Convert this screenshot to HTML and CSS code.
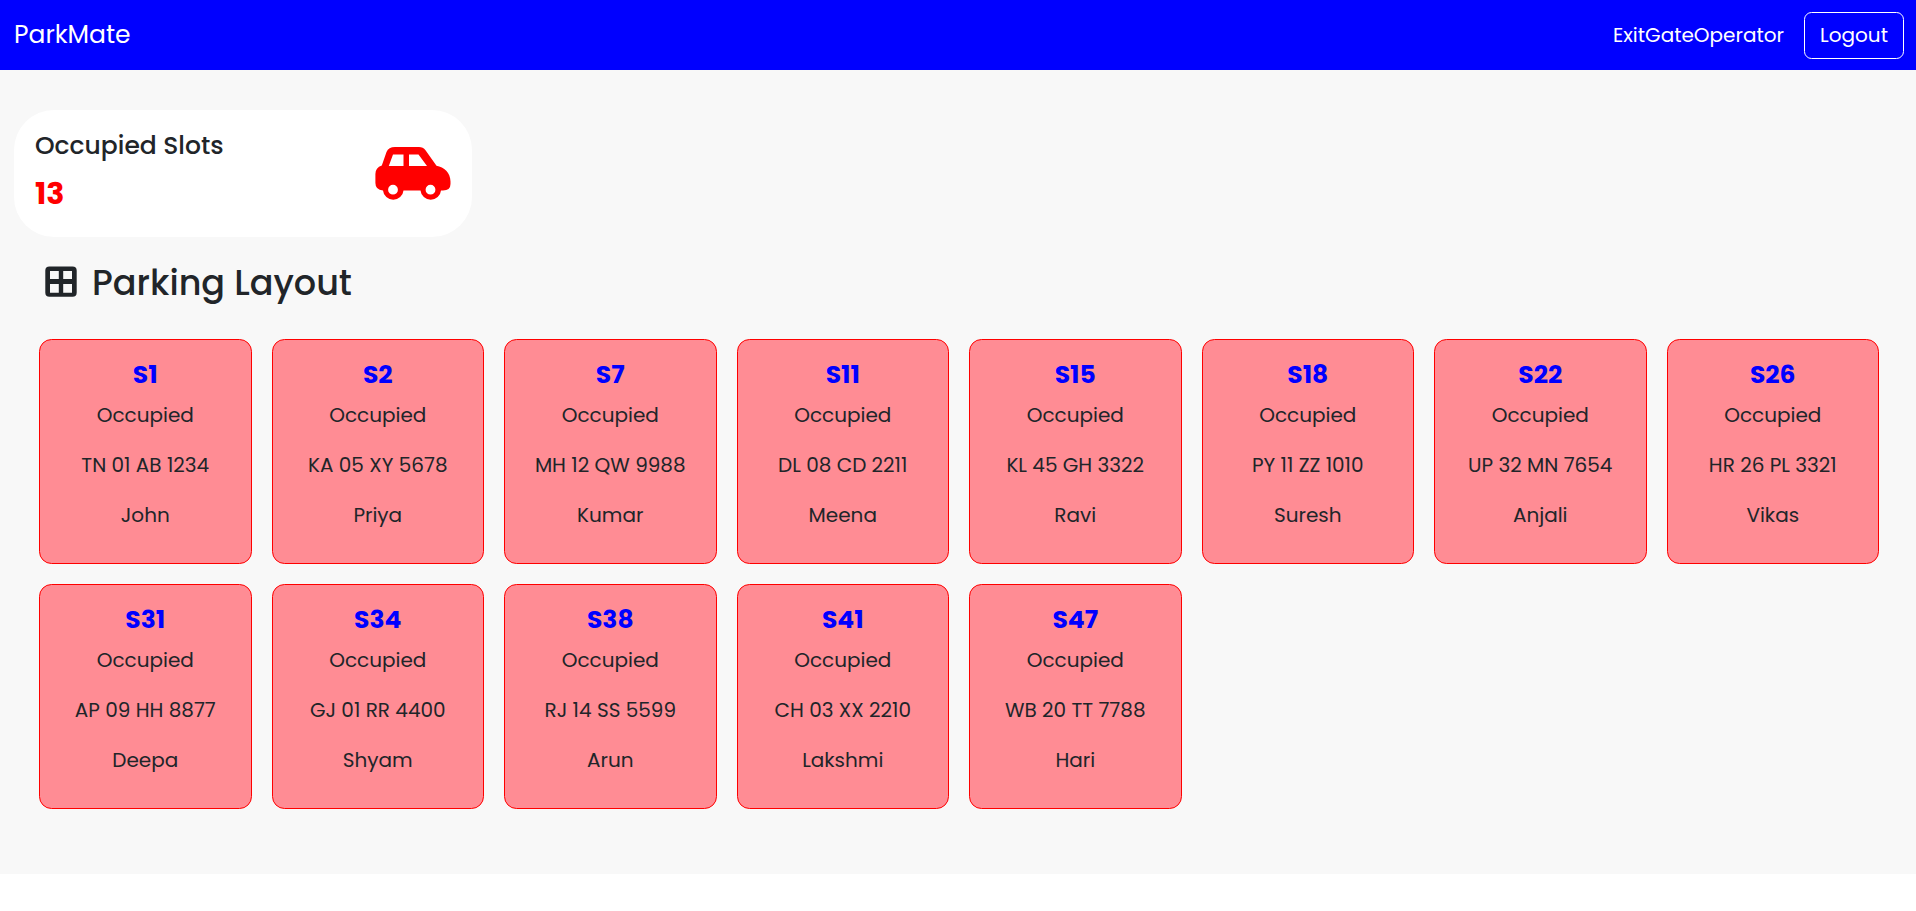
FILE: index.html
```html
<!DOCTYPE html>
<html lang="en">
<head>
<meta charset="utf-8">
<title>ParkMate</title>
<link rel="stylesheet" href="styles.css">
</head>
<body>
<nav class="navbar">
  <span class="brand">ParkMate</span>
  <div class="nav-right">
    <span class="role">ExitGateOperator</span>
    <button class="logout">Logout</button>
  </div>
</nav>
<main class="page">
  <section class="stat">
    <div>
      <h5 class="stat-title">Occupied Slots</h5>
      <p class="stat-value">13</p>
    </div>
    <svg class="car" viewBox="0 0 76 54" width="76" height="54">
      <path fill="#f00" fill-rule="evenodd" d="M20 0H44Q48 0 50.500 3.200L61.500 18.800C69 20 75.500 26 75.500 34.500V37Q75.500 43.500 68 43.500H66A10.300 10.300 0 0 1 45.500 43.500H28.500A10.300 10.300 0 0 1 8 43.500Q.4 43 .4 36V27Q.4 20.500 6.800 18.500L11.500 5Q13.500 0 20 0ZM18 7.500L13.800 19H28.500V7.500ZM34 7.500V19H52L43.500 7.500ZM18 37.800A4.900 4.900 0 1 0 18 47.600A4.900 4.900 0 1 0 18 37.800ZM55.500 37.800A4.900 4.900 0 1 0 55.500 47.600A4.900 4.900 0 1 0 55.500 37.800Z"/>
    </svg>
  </section>
  <h2 class="heading">
    <svg class="grid-icon" width="32" height="31" viewBox="0 0 32 31"><path fill="#212529" fill-rule="evenodd" d="M4.500 .4H27.500Q31.700 .4 31.700 4.500V26.500Q31.700 30.800 27.500 30.800H4.500Q.3 30.800 .3 26.500V4.500Q.3 .4 4.500 .4ZM5 5V13H13.800V5ZM18.200 5V13H27V5ZM5 18V26.800H13.800V18ZM18.200 18V26.800H27V18Z"/></svg>
    <span>Parking Layout</span>
  </h2>
  <section class="grid">
    <article class="slot"><h5>S1</h5><p>Occupied</p><p>TN 01 AB 1234</p><p>John</p></article>
    <article class="slot"><h5>S2</h5><p>Occupied</p><p>KA 05 XY 5678</p><p>Priya</p></article>
    <article class="slot"><h5>S7</h5><p>Occupied</p><p>MH 12 QW 9988</p><p>Kumar</p></article>
    <article class="slot"><h5>S11</h5><p>Occupied</p><p>DL 08 CD 2211</p><p>Meena</p></article>
    <article class="slot"><h5>S15</h5><p>Occupied</p><p>KL 45 GH 3322</p><p>Ravi</p></article>
    <article class="slot"><h5>S18</h5><p>Occupied</p><p>PY 11 ZZ 1010</p><p>Suresh</p></article>
    <article class="slot"><h5>S22</h5><p>Occupied</p><p>UP 32 MN 7654</p><p>Anjali</p></article>
    <article class="slot"><h5>S26</h5><p>Occupied</p><p>HR 26 PL 3321</p><p>Vikas</p></article>
    <article class="slot"><h5>S31</h5><p>Occupied</p><p>AP 09 HH 8877</p><p>Deepa</p></article>
    <article class="slot"><h5>S34</h5><p>Occupied</p><p>GJ 01 RR 4400</p><p>Shyam</p></article>
    <article class="slot"><h5>S38</h5><p>Occupied</p><p>RJ 14 SS 5599</p><p>Arun</p></article>
    <article class="slot"><h5>S41</h5><p>Occupied</p><p>CH 03 XX 2210</p><p>Lakshmi</p></article>
    <article class="slot"><h5>S47</h5><p>Occupied</p><p>WB 20 TT 7788</p><p>Hari</p></article>
  </section>
</main>
</body>
</html>
```

FILE: styles.css
```css
* { box-sizing: border-box; }
body {
  margin: 0;
  background: #fff;
  color: #212529;
  font: 400 20px/30px Poppins, Inter, sans-serif;
}
h2, h5, p { margin: 0; }
.navbar {
  display: flex;
  align-items: center;
  justify-content: space-between;
  height: 70px;
  padding: 0 12px 0 14px;
  background: #00f;
  color: #fff;
}
.brand { font-size: 25px; }
.nav-right { display: flex; align-items: center; gap: 20px; }
.logout {
  width: 100px;
  height: 47px;
  padding: 0;
  border: 1px solid #fff;
  border-radius: 7.5px;
  background: transparent;
  color: #fff;
  font: inherit;
}
.page { height: 804px; padding: 40px 37px 0 14px; background: #f8f8f8; }
.stat {
  display: flex;
  justify-content: space-between;
  width: 458px;
  height: 127px;
  padding: 21px 21px 0 21px;
  border-radius: 40px;
  background: #fff;
}
.stat-title { font-size: 25px; font-weight: 500; }
.stat-value { margin-top: 10px; color: #f00; font-size: 30px; font-weight: 700; line-height: 46px; }
.car { margin-top: 16px; }
.heading {
  display: flex;
  align-items: center;
  gap: 15px;
  margin: 25px 0 0 31px;
  height: 42px;
  font-size: 35px;
  font-weight: 500;
}
.grid-icon { margin-bottom: 3px; }
.grid {
  display: grid;
  grid-template-columns: repeat(8, minmax(0, 1fr));
  gap: 20px;
  margin: 35px 0 0 25px;
}
.slot {
  height: 225px;
  padding-top: 20px;
  border: 1px solid #f00;
  border-radius: 12.5px;
  background: #ff8c94;
  text-align: center;
}
.slot h5 { margin-bottom: 10px; color: #00f; font-size: 25px; font-weight: 700; }
.slot p { margin-bottom: 20px; }
```
